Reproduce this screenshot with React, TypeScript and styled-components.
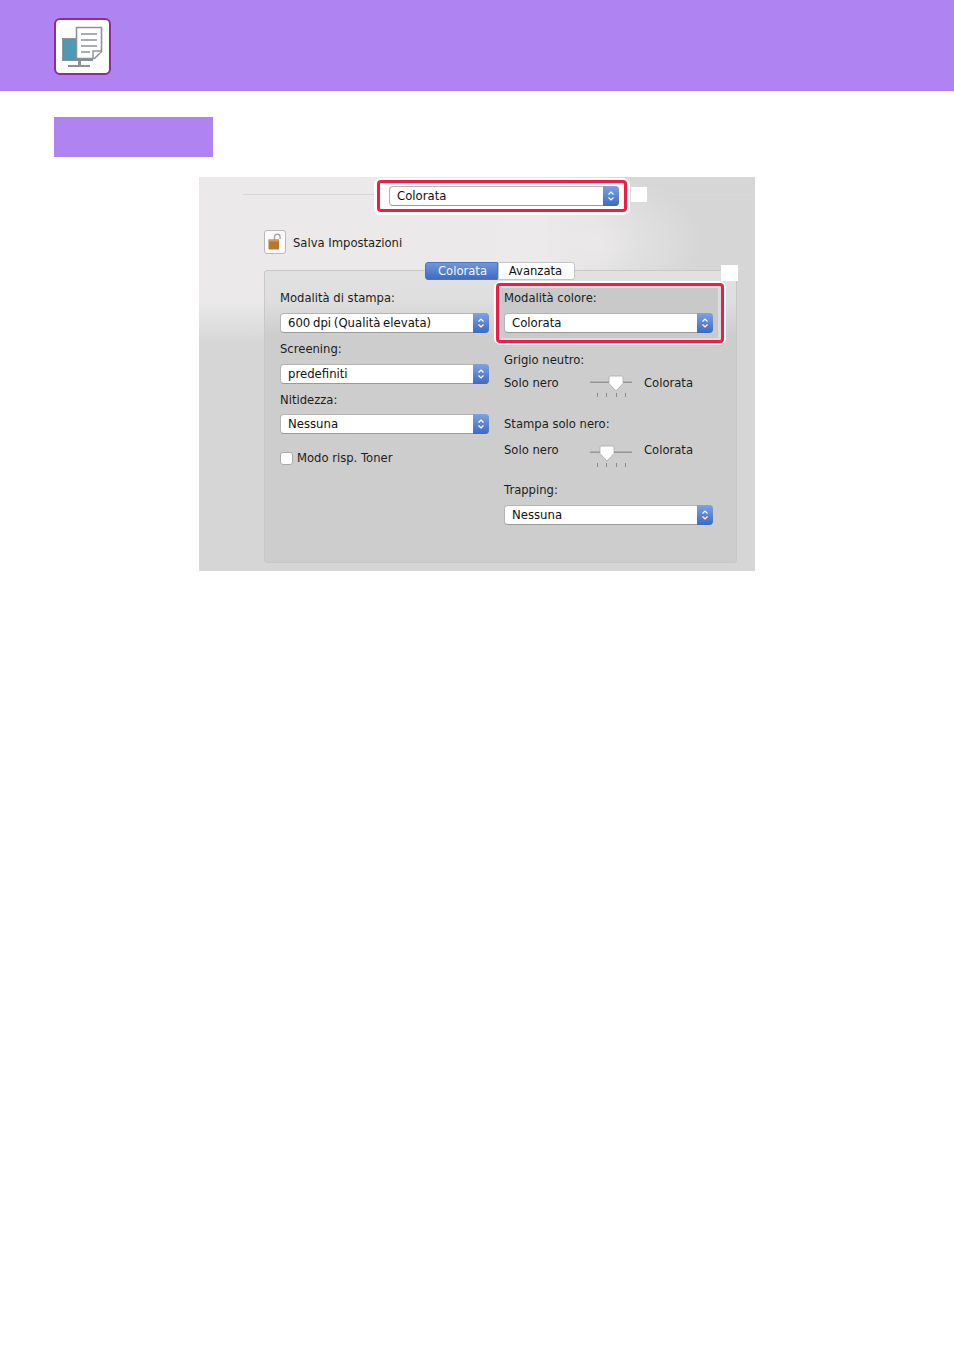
import React from 'react'
import styled, { createGlobalStyle } from 'styled-components'

const GlobalStyle = createGlobalStyle`
  body {
    margin: 0;
    background: #fff;
    font-family: "DejaVu Sans", sans-serif;
  }
`

const Page = styled.div`
  width: 954px;
  height: 1350px;
  overflow: hidden;
`

const Header = styled.header`
  height: 91px;
  background: #b083f2;
  padding: 18px 0 0 54px;
  box-sizing: border-box;
`

const IconBox = styled.div`
  width: 57px;
  height: 57px;
  box-sizing: border-box;
  background: #fff;
  border: 2px solid #8f2c9b;
  border-radius: 6px;
`

const SectionBar = styled.div`
  width: 159px;
  height: 40px;
  margin: 26px 0 20px 54px;
  background: #b083f2;
`

const Dialog = styled.section`
  position: relative;
  width: 556px;
  height: 394px;
  margin-left: 199px;
  box-sizing: border-box;
  color: #1c1c1c;
  font-size: 11.6px;
  background:
    radial-gradient(ellipse 110px 70px at 395px 65px, rgba(236, 234, 234, 0.9), rgba(236, 234, 234, 0)),
    linear-gradient(90deg, rgba(235, 233, 233, 1) 0, rgba(235, 233, 233, 1) 62%, rgba(235, 233, 233, 0) 78%),
    linear-gradient(180deg, #d6d6d6 0, #d6d6d6 100%);
  &::after {
    content: '';
    position: absolute;
    left: 0;
    right: 0;
    top: 125px;
    bottom: 0;
    background: linear-gradient(180deg, rgba(214, 214, 214, 0) 0, #d6d6d6 42px);
  }
`

const DialogBody = styled.div`
  position: relative;
  z-index: 1;
`

const TopRow = styled.div`
  display: flex;
  align-items: flex-start;
  height: 38px;
  padding: 1px 0 0 44px;
  box-sizing: border-box;
`

const Rule = styled.div<{ $w?: number }>`
  flex: ${({ $w }) => ($w ? `0 0 ${$w}px` : '1')};
  height: 1px;
  margin-top: 16px;
  background: #d9d7d7;
`

const Halo = styled.div<{ $w: number; $pad: string }>`
  width: ${({ $w }) => $w}px;
  box-sizing: border-box;
  background: #fff;
  padding: ${({ $pad }) => $pad};
  border-radius: 7px;
  flex: none;
`

const RedFrame = styled.div<{ $pad: string; $bg?: string }>`
  box-sizing: border-box;
  border: 3px solid #ee1c46;
  border-radius: 4px;
  padding: ${({ $pad }) => $pad};
  background: ${({ $bg }) => $bg ?? 'transparent'};
`

const WhiteTag = styled.div`
  width: 16px;
  height: 15px;
  margin: 9px 0 0 1px;
  background: #fff;
  flex: none;
`

const LockRow = styled.div`
  display: flex;
  align-items: center;
  gap: 7px;
  height: 24px;
  margin: 15px 0 16px 65px;
  font-size: 11.6px;
`

const LockText = styled.span`
  margin-top: 2px;
`

const LockButton = styled.div`
  width: 22px;
  height: 24px;
  box-sizing: border-box;
  background: #fbfafa;
  border: 1px solid #b9b9b9;
  border-radius: 3px;
  display: flex;
  align-items: center;
  justify-content: center;
`

const Panel = styled.div`
  position: relative;
  width: 473px;
  height: 293px;
  margin-left: 65px;
  box-sizing: border-box;
  border: 1px solid #c8c8c8;
  border-radius: 3px;
  background: linear-gradient(180deg, #e2e1e1 0, #e0dfdf 10%, #cdcdcd 22%, #cdcdcd 100%);
  display: grid;
  grid-template-columns: 209px 209px;
  column-gap: 15px;
  padding: 20px 0 0 15px;
`

const Tabs = styled.div`
  position: absolute;
  top: -9px;
  left: 160px;
  display: flex;
  height: 18px;
`

const Tab = styled.div<{ $active?: boolean }>`
  box-sizing: border-box;
  height: 18px;
  display: flex;
  align-items: center;
  justify-content: center;
  font-size: 11.6px;
  width: ${({ $active }) => ($active ? 73 : 77)}px;
  padding-left: ${({ $active }) => ($active ? 2 : 0)}px;
  padding-right: ${({ $active }) => ($active ? 0 : 2)}px;
  color: ${({ $active }) => ($active ? '#f4f7fd' : '#111')};
  background: ${({ $active }) => ($active ? 'linear-gradient(180deg, #6f97de, #3f6cc0)' : '#fff')};
  border: 1px solid ${({ $active }) => ($active ? '#4a74c2' : '#c4c4c4')};
  border-radius: ${({ $active }) => ($active ? '3px 0 0 3px' : '0 3px 3px 0')};
`

const CornerTag = styled(WhiteTag)`
  position: absolute;
  top: -6px;
  right: -2px;
  margin: 0;
  width: 17px;
  height: 16px;
`

const Column = styled.div`
  display: flex;
  flex-direction: column;
`

const Label = styled.div<{ $top?: number }>`
  height: 14px;
  line-height: 14px;
  margin-top: ${({ $top }) => $top ?? 0}px;
  white-space: nowrap;
`

const SelectBox = styled.div<{ $top?: number }>`
  display: flex;
  height: 20px;
  margin-top: ${({ $top }) => $top ?? 0}px;
  box-sizing: border-box;
  background: #fff;
  border-radius: 4px;
  border: 1px solid #b4b4b4;
  border-bottom-color: #9a9a9a;
  font-size: 11.7px;
  word-spacing: -1px;
  line-height: 18px;
  color: #111;
`

const SelectText = styled.div`
  flex: 1;
  padding-left: 7px;
  white-space: nowrap;
  overflow: hidden;
`

const Stepper = styled.div`
  width: 16px;
  margin: -1px -1px -1px 0;
  border-radius: 0 4px 4px 0;
  background: linear-gradient(180deg, #7ea2e3, #3e69bf);
  display: flex;
  align-items: center;
  justify-content: center;
`

const RedGroup = styled.div`
  margin: -10px 0 0 -10px;
`

const GroupInner = styled.div`
  background: #c9c9c9;
  padding: 3px 5px 0 3px;
  height: 50px;
  box-sizing: border-box;
  display: flex;
  flex-direction: column;
`

const CheckRow = styled.div`
  display: flex;
  align-items: center;
  gap: 4px;
  margin-top: 17px;
  height: 14px;
`

const CheckBox = styled.div`
  width: 13px;
  height: 13px;
  box-sizing: border-box;
  background: #fff;
  border: 1px solid #aaa;
  border-radius: 3px;
`

const SliderRow = styled.div<{ $top: number }>`
  display: flex;
  align-items: flex-start;
  height: 22px;
  margin-top: ${({ $top }) => $top}px;
  line-height: 14px;
`

const SliderLabel = styled.div`
  width: 86px;
  flex: none;
`

const SliderTrack = styled.svg<{ $drop: number }>`
  flex: none;
  margin: ${({ $drop }) => $drop}px 10px 0 0;
`

const StepperArrows = () => (
  <svg width="8" height="12" viewBox="0 0 8 12" fill="none" stroke="#fff" strokeWidth="1.2">
    <path d="M1.5 4.5 4 2l2.5 2.5M1.5 7.5 4 10l2.5-2.5" />
  </svg>
)

const Select = ({ value, top }: { value: string; top?: number }) => (
  <SelectBox $top={top}>
    <SelectText>{value}</SelectText>
    <Stepper>
      <StepperArrows />
    </Stepper>
  </SelectBox>
)

const Slider = ({ pos, drop }: { pos: number; drop: number }) => (
  <SliderTrack $drop={drop} width="44" height="24" viewBox="0 0 44 24">
    <rect x="0" y="6.5" width="42" height="1.5" fill="#979797" />
    {[7, 16, 26, 35].map((x) => (
      <rect key={x} x={x} y="18" width="1" height="4" fill="#8a8a8a" />
    ))}
    <path
      d={`M${pos - 7} 2.5 q0 -1.5 1.5 -1.5 h11 q1.5 0 1.5 1.5 v6 l-7 7.5 l-7 -7.5 z`}
      fill="#fff"
      stroke="#aaa"
      strokeWidth="0.8"
    />
  </SliderTrack>
)

const PrintIcon = () => (
  <svg width="53" height="53" viewBox="0 0 53 53">
    <rect x="6.5" y="18.5" width="30" height="22" fill="#4a9bb3" stroke="#8c9295" />
    <rect x="22" y="41" width="3" height="4" fill="#8c9295" />
    <rect x="12" y="45" width="22" height="2" fill="#8c9295" />
    <path d="M20.5 7.5h25v24l-7 7h-18z" fill="#fff" stroke="#8c9295" strokeWidth="1.6" />
    <path d="M25 14h16M25 20h16M25 26h16M25 32h9" stroke="#8c9295" strokeWidth="1.4" />
    <path d="M37 38v-7h8.5" fill="#fff" stroke="#8c9295" strokeWidth="1.4" />
  </svg>
)

const LockIcon = () => (
  <svg width="14" height="18" viewBox="0 0 14 18">
    <path d="M6.5 7V4a2.8 2.8 0 0 1 5.6 0V6" fill="none" stroke="#a8a8a8" strokeWidth="1.4" />
    <rect x="0.5" y="6.5" width="10.5" height="10" rx="1" fill="#b8772e" />
    <rect x="0.5" y="6.5" width="10.5" height="2" fill="#d39a52" />
  </svg>
)

export default function App() {
  return (
    <Page>
      <GlobalStyle />
      <Header>
        <IconBox>
          <PrintIcon />
        </IconBox>
      </Header>
      <SectionBar />
      <Dialog>
        <DialogBody>
          <TopRow>
            <Rule $w={131} />
            <Halo $w={256} $pad="2px 3px 3px">
              <RedFrame $pad="3px 5px 3px 9px">
                <Select value="Colorata" />
              </RedFrame>
            </Halo>
            <WhiteTag />
            <Rule />
          </TopRow>
          <LockRow>
            <LockButton>
              <LockIcon />
            </LockButton>
            <LockText>Salva Impostazioni</LockText>
          </LockRow>
          <Panel>
            <Tabs>
              <Tab $active>Colorata</Tab>
              <Tab>Avanzata</Tab>
            </Tabs>
            <Column>
              <Label>Modalità di stampa:</Label>
              <Select value="600 dpi (Qualità elevata)" top={8} />
              <Label $top={9}>Screening:</Label>
              <Select value="predefiniti" top={8} />
              <Label $top={9}>Nitidezza:</Label>
              <Select value="Nessuna" top={7} />
              <CheckRow>
                <CheckBox />
                Modo risp. Toner
              </CheckRow>
            </Column>
            <Column>
              <RedGroup>
                <Halo $w={232} $pad="2px">
                  <RedFrame $pad="2px 3px 2px 2px" $bg="#dcdcdc">
                    <GroupInner>
                      <Label>Modalità colore:</Label>
                      <Select value="Colorata" top={8} />
                    </GroupInner>
                  </RedFrame>
                </Halo>
              </RedGroup>
              <Label $top={8}>Grigio neutro:</Label>
              <SliderRow $top={9}>
                <SliderLabel>Solo nero</SliderLabel>
                <Slider pos={26} drop={-1} />
                Colorata
              </SliderRow>
              <Label $top={19}>Stampa solo nero:</Label>
              <SliderRow $top={12}>
                <SliderLabel>Solo nero</SliderLabel>
                <Slider pos={17} drop={2} />
                Colorata
              </SliderRow>
              <Label $top={18}>Trapping:</Label>
              <Select value="Nessuna" top={8} />
            </Column>
            <CornerTag />
          </Panel>
        </DialogBody>
      </Dialog>
    </Page>
  )
}
